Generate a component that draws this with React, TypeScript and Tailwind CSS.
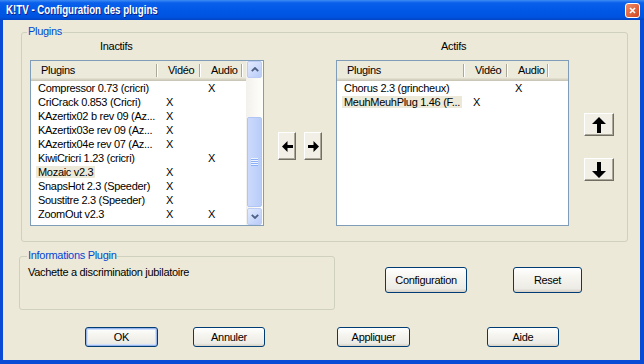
import React from 'react';

type Row = { name: string; video?: boolean; audio?: boolean; selected?: boolean };

const INACTIFS: Row[] = [
  { name: 'Compressor 0.73 (cricri)', audio: true },
  { name: 'CriCrack 0.853 (Cricri)', video: true },
  { name: 'KAzertix02 b rev 09 (Az...', video: true },
  { name: 'KAzertix03e rev 09 (Az...', video: true },
  { name: 'KAzertix04e rev 07 (Az...', video: true },
  { name: 'KiwiCricri 1.23 (cricri)', audio: true },
  { name: 'Mozaic v2.3', video: true, selected: true },
  { name: 'SnapsHot 2.3 (Speeder)', video: true },
  { name: 'Soustitre 2.3 (Speeder)', video: true },
  { name: 'ZoomOut v2.3', video: true, audio: true },
];

const ACTIFS: Row[] = [
  { name: 'Chorus 2.3 (grincheux)', audio: true },
  { name: 'MeuhMeuhPlug 1.46 (F...', video: true, selected: true },
];

const HEADERS = ['Plugins', 'Vidéo', 'Audio'];

const Arrow = ({ dir }: { dir: 'left' | 'right' | 'up' | 'down' }) => {
  if (dir === 'left' || dir === 'right') {
    return (
      <svg width="11" height="11" viewBox="0 0 11 11" className={dir === 'right' ? '-scale-x-100' : ''}>
        <polygon points="0,5.5 5.5,0 5.5,4 11,4 11,7 5.5,7 5.5,11" fill="#000" />
      </svg>
    );
  }
  return (
    <svg width="14" height="16" viewBox="0 0 14 16" className={dir === 'down' ? '-scale-y-100' : ''}>
      <polygon points="7,0 14,7 9,7 9,16 5,16 5,7 0,7" fill="#000" />
    </svg>
  );
};

// classic raised button used for the move arrows
const ClassicButton = ({ className, children }: { className: string; children: React.ReactNode }) => (
  <button className={`flex items-center justify-center border border-t-white border-l-white border-r-[#716F64] border-b-[#716F64] bg-[#F1EFE6] shadow-[inset_-1px_-1px_0_#ACA899] ${className}`}>
    {children}
  </button>
);

const XPButton = ({ label, className, isDefault }: { label: string; className: string; isDefault?: boolean }) => (
  <button
    className={`flex items-center justify-center rounded-[3px] border border-[#003C74] bg-[linear-gradient(to_bottom,#FFFFFF_0%,#F5F4EF_40%,#ECEBE6_85%,#D6D0C5_100%)] text-black ${
      isDefault ? 'shadow-[inset_0_0_0_1px_#98B4E8,inset_0_0_0_2px_#CEE0FD]' : ''
    } ${className}`}
  >
    {label}
  </button>
);

const ScrollButton = ({ up }: { up?: boolean }) => (
  <div className="mx-px flex h-[17px] items-center justify-center rounded-[2px] border border-[#BCCCF5] bg-[linear-gradient(135deg,#E3EBFE,#B8CBF8)]">
    <svg width="8" height="5" viewBox="0 0 8 5" className={up ? '' : '-scale-y-100'}>
      <polyline points="0.8,4.2 4,1 7.2,4.2" fill="none" stroke="#4D6185" strokeWidth="1.8" />
    </svg>
  </div>
);

const Scrollbar = () => (
  <div className="flex w-[17px] flex-col bg-[linear-gradient(to_right,#F3F1EC,#FEFEFB)]">
    <ScrollButton up />
    <div className="h-[39px]" />
    <div className="mx-px flex h-[90px] flex-col items-center justify-center rounded-[2px] border border-[#B1C5F4] bg-[linear-gradient(to_right,#CCDAFC,#B9CDF9)]">
      {[0, 1, 2, 3].map((i) => (
        <div key={i} className="h-[2px] w-[7px] border-t border-b border-t-[#EEF4FE] border-b-[#8CB0F8]" />
      ))}
    </div>
    <div className="flex-1" />
    <ScrollButton />
  </div>
);

const ListView = ({
  rows,
  cols,
  className,
  scroll,
}: {
  rows: Row[];
  cols: string[];
  className: string;
  scroll?: boolean;
}) => (
  <div className={`flex h-[166px] border border-[#7F9DB9] bg-white ${className}`}>
    <div className="flex flex-1 flex-col overflow-hidden">
      {/* header */}
      <div className="flex h-[20px] shrink-0 bg-[#EBEADB] shadow-[inset_0_-1px_0_#CBC7B8,inset_0_-2px_0_#D6D2C2,inset_0_-3px_0_#E2DECD]">
        {HEADERS.map((h, i) => (
          <div key={h} className={`flex items-center justify-between pb-[2px] ${cols[i]}`}>
            <span className="pl-[10px]">{h}</span>
            <span className="h-[13px] w-[2px] border-l border-r border-l-[#ACA899] border-r-white" />
          </div>
        ))}
      </div>
      {rows.map((r) => (
        <div key={r.name} className="flex h-[14px] items-center leading-[14px]">
          <div className={`overflow-hidden whitespace-nowrap pl-[5px] ${cols[0]}`}>
            <span className={`px-[2px] ${r.selected ? 'bg-[#ECE9D8]' : ''}`}>{r.name}</span>
          </div>
          <div className={`pl-[8px] ${cols[1]}`}>{r.video ? 'X' : ''}</div>
          <div className={`pl-[7px] ${cols[2]}`}>{r.audio ? 'X' : ''}</div>
        </div>
      ))}
    </div>
    {scroll && <Scrollbar />}
  </div>
);

const GroupBox = ({ title, className, children }: { title: string; className: string; children: React.ReactNode }) => (
  <div className={`relative rounded-[3px] border border-[#D0D0BF] ${className}`}>
    <span className="absolute -top-[8px] bg-[#ECE9D8] px-px leading-[13px] text-[#0046D5]">{title}</span>
    {children}
  </div>
);

export default function App() {
  return (
    <div className="flex h-[364px] w-[644px] flex-col overflow-hidden bg-white font-['Liberation_Sans',Arial,sans-serif] text-[11px] tracking-[-0.3px] text-black">
      {/* Title bar */}
      <div className="flex h-[20px] shrink-0 items-center justify-between bg-[linear-gradient(to_bottom,#3D8CF4_0%,#0A60EB_14%,#0058E6_50%,#0053E1_85%,#0044C4_100%)] pl-[6px]">
        <span className="inline-block origin-left scale-x-[0.81] whitespace-nowrap text-[12px] font-bold tracking-normal text-white [text-shadow:1px_1px_0_#0B1D8A]">
          K!TV - Configuration des plugins
        </span>
        <div className="mr-[4px] flex h-[15px] w-[15px] items-center justify-center rounded-[3px] border border-white bg-[linear-gradient(135deg,#EE8C6A,#D3461C)]">
          <svg width="7" height="7" viewBox="0 0 7 7">
            <path d="M1 1L6 6M6 1L1 6" stroke="#fff" strokeWidth="1.6" />
          </svg>
        </div>
      </div>

      {/* Body */}
      <div className="flex flex-1 flex-col border-r-[4px] border-b-[4px] border-l-[3px] border-[#0A4BD6] bg-[#ECE9D8] pt-[12px] pl-[16px]">
        <GroupBox title="Plugins" className="ml-[2px] h-[210px] w-[607px] [&>span]:left-[5px]">
          <div className="flex pl-[8px]">
            {/* Inactifs */}
            <div className="flex flex-col">
              <div className="flex h-[27px] items-center pl-[70px]">Inactifs</div>
              <ListView rows={INACTIFS} cols={['w-[127px]', 'w-[43px]', 'w-[42px]']} className="w-[234px]" scroll />
            </div>
            {/* move buttons */}
            <div className="ml-[14px] flex gap-[8px] pt-[99px]">
              <ClassicButton className="h-[28px] w-[18px]">
                <Arrow dir="left" />
              </ClassicButton>
              <ClassicButton className="h-[28px] w-[18px]">
                <Arrow dir="right" />
              </ClassicButton>
            </div>
            {/* Actifs */}
            <div className="ml-[14px] flex flex-col">
              <div className="flex h-[27px] items-center pl-[105px]">Actifs</div>
              <ListView rows={ACTIFS} cols={['w-[128px]', 'w-[43px]', 'w-[41px]']} className="w-[233px]" />
            </div>
            {/* order buttons */}
            <div className="ml-[15px] flex flex-col gap-[22px] pt-[80px]">
              <ClassicButton className="h-[23px] w-[30px]">
                <Arrow dir="up" />
              </ClassicButton>
              <ClassicButton className="h-[23px] w-[30px]">
                <Arrow dir="down" />
              </ClassicButton>
            </div>
          </div>
        </GroupBox>

        <div className="mt-[14px] flex items-start">
          <GroupBox title="Informations Plugin" className="h-[54px] w-[316px] [&>span]:left-[7px]">
            <div className="pt-[9px] pl-[8px] leading-[13px]">Vachette a discrimination jubilatoire</div>
          </GroupBox>
          <XPButton label="Configuration" className="mt-[11px] ml-[50px] h-[26px] w-[82px]" />
          <XPButton label="Reset" className="mt-[11px] ml-[46px] h-[26px] w-[69px]" />
        </div>

        <div className="mt-[17px] flex">
          <XPButton label="OK" isDefault className="ml-[66px] h-[20px] w-[73px]" />
          <XPButton label="Annuler" className="ml-[35px] h-[20px] w-[72px]" />
          <XPButton label="Appliquer" className="ml-[72px] h-[20px] w-[73px]" />
          <XPButton label="Aide" className="ml-[77px] h-[20px] w-[72px]" />
        </div>
      </div>
    </div>
  );
}
